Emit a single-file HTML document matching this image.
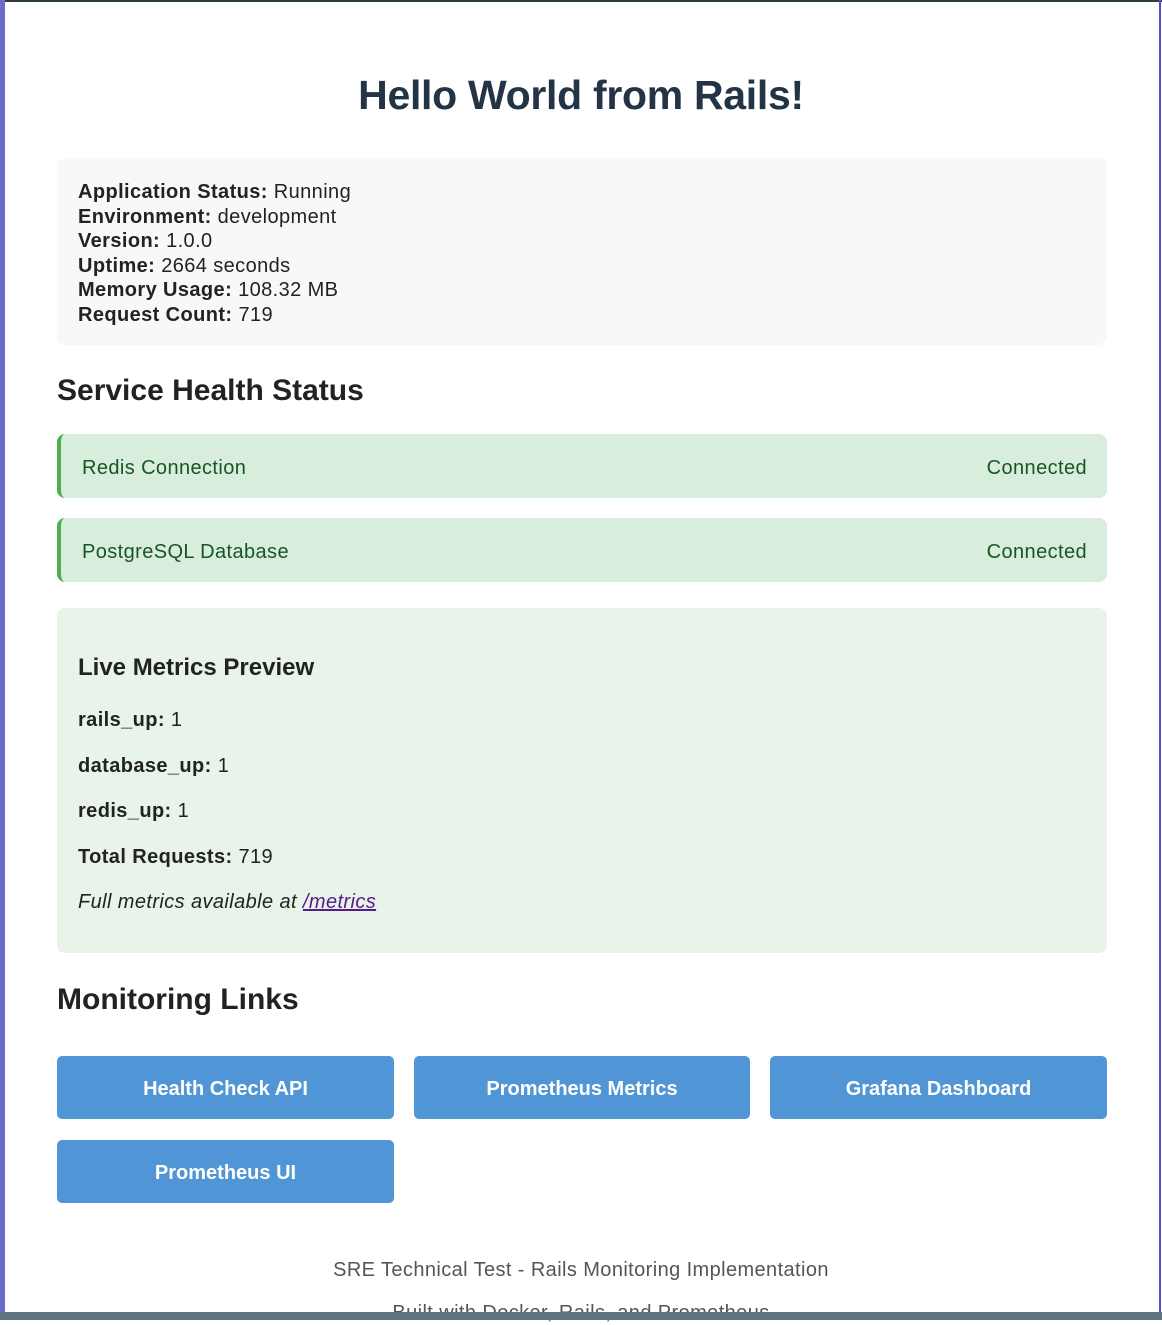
<!DOCTYPE html>
<html><head><meta charset="utf-8"><style>
*{box-sizing:border-box}
body{margin:0;width:1162px;height:1320px;overflow:hidden;background:#fff;font-family:"Liberation Sans",sans-serif;color:#222;position:relative;letter-spacing:0.4px}
.lb{position:absolute;left:0;top:0;width:5px;height:1320px;background:#6b6bc9}
.tb{position:absolute;left:0;top:0;width:1162px;height:2px;background:#2c3e3a}
.rb{position:absolute;right:1px;top:0;width:2px;height:1320px;background:#5a4fc4}
.bb{position:absolute;left:0;top:1312px;width:1162px;height:8px;background:#5c7480}
h1{position:absolute;top:72px;left:0;width:1162px;text-align:center;margin:0;font-size:41px;color:#243447;font-weight:bold;letter-spacing:-0.3px}
.info{position:absolute;left:57px;top:158px;width:1050px;height:187px;background:#f7f8fa;border-radius:8px;padding:22px 21px 0;font-size:20px;line-height:24.5px}
h2{position:absolute;left:57px;margin:0;font-size:30px;font-weight:bold;color:#222;letter-spacing:0}
.svc{position:absolute;left:57px;width:1050px;height:64px;background:#d9eddc;border-left:4px solid #4caf50;border-radius:8px;color:#155724;font-size:20px;display:flex;justify-content:space-between;align-items:center;padding:4px 20px 0 21px}
.met{position:absolute;left:57px;top:608px;width:1050px;height:345px;background:#e8f4e9;border-radius:8px;padding:0 21px}
.met p{position:absolute;left:21px;margin:0;font-size:20px}
.btn{position:absolute;height:63px;width:337px;background:#5096d6;border-radius:5px;color:#fff;font-weight:bold;font-size:20px;display:flex;align-items:center;justify-content:center;padding-top:3px;letter-spacing:0}
.ft{position:absolute;left:0;width:1162px;text-align:center;font-size:20px;color:#555}
</style></head><body>
<div class="tb"></div><div class="lb"></div><div class="rb"></div>
<h1>Hello World from Rails!</h1>
<div class="info"><b>Application Status:</b> Running<br><b>Environment:</b> development<br><b>Version:</b> 1.0.0<br><b>Uptime:</b> 2664 seconds<br><b>Memory Usage:</b> 108.32 MB<br><b>Request Count:</b> 719</div>
<h2 style="top:374px">Service Health Status</h2>
<div class="svc" style="top:434px"><span>Redis Connection</span><span>Connected</span></div>
<div class="svc" style="top:518px"><span>PostgreSQL Database</span><span>Connected</span></div>
<div class="met">
<p style="top:46px;font-size:24px;font-weight:bold;letter-spacing:0">Live Metrics Preview</p>
<p style="top:101px"><b>rails_up:</b> 1</p>
<p style="top:147px"><b>database_up:</b> 1</p>
<p style="top:192px"><b>redis_up:</b> 1</p>
<p style="top:238px"><b>Total Requests:</b> 719</p>
<p style="top:283px"><i>Full metrics available at <a style="color:#551a8b;text-decoration:underline">/metrics</a></i></p>
</div>
<h2 style="top:983px">Monitoring Links</h2>
<div class="btn" style="left:57px;top:1056px">Health Check API</div>
<div class="btn" style="left:414px;top:1056px;width:336px">Prometheus Metrics</div>
<div class="btn" style="left:770px;top:1056px">Grafana Dashboard</div>
<div class="btn" style="left:57px;top:1140px">Prometheus UI</div>
<div class="ft" style="top:1259px">SRE Technical Test - Rails Monitoring Implementation</div>
<div class="ft" style="top:1302px">Built with Docker, Rails, and Prometheus</div>
<div class="bb"></div>
</body></html>
